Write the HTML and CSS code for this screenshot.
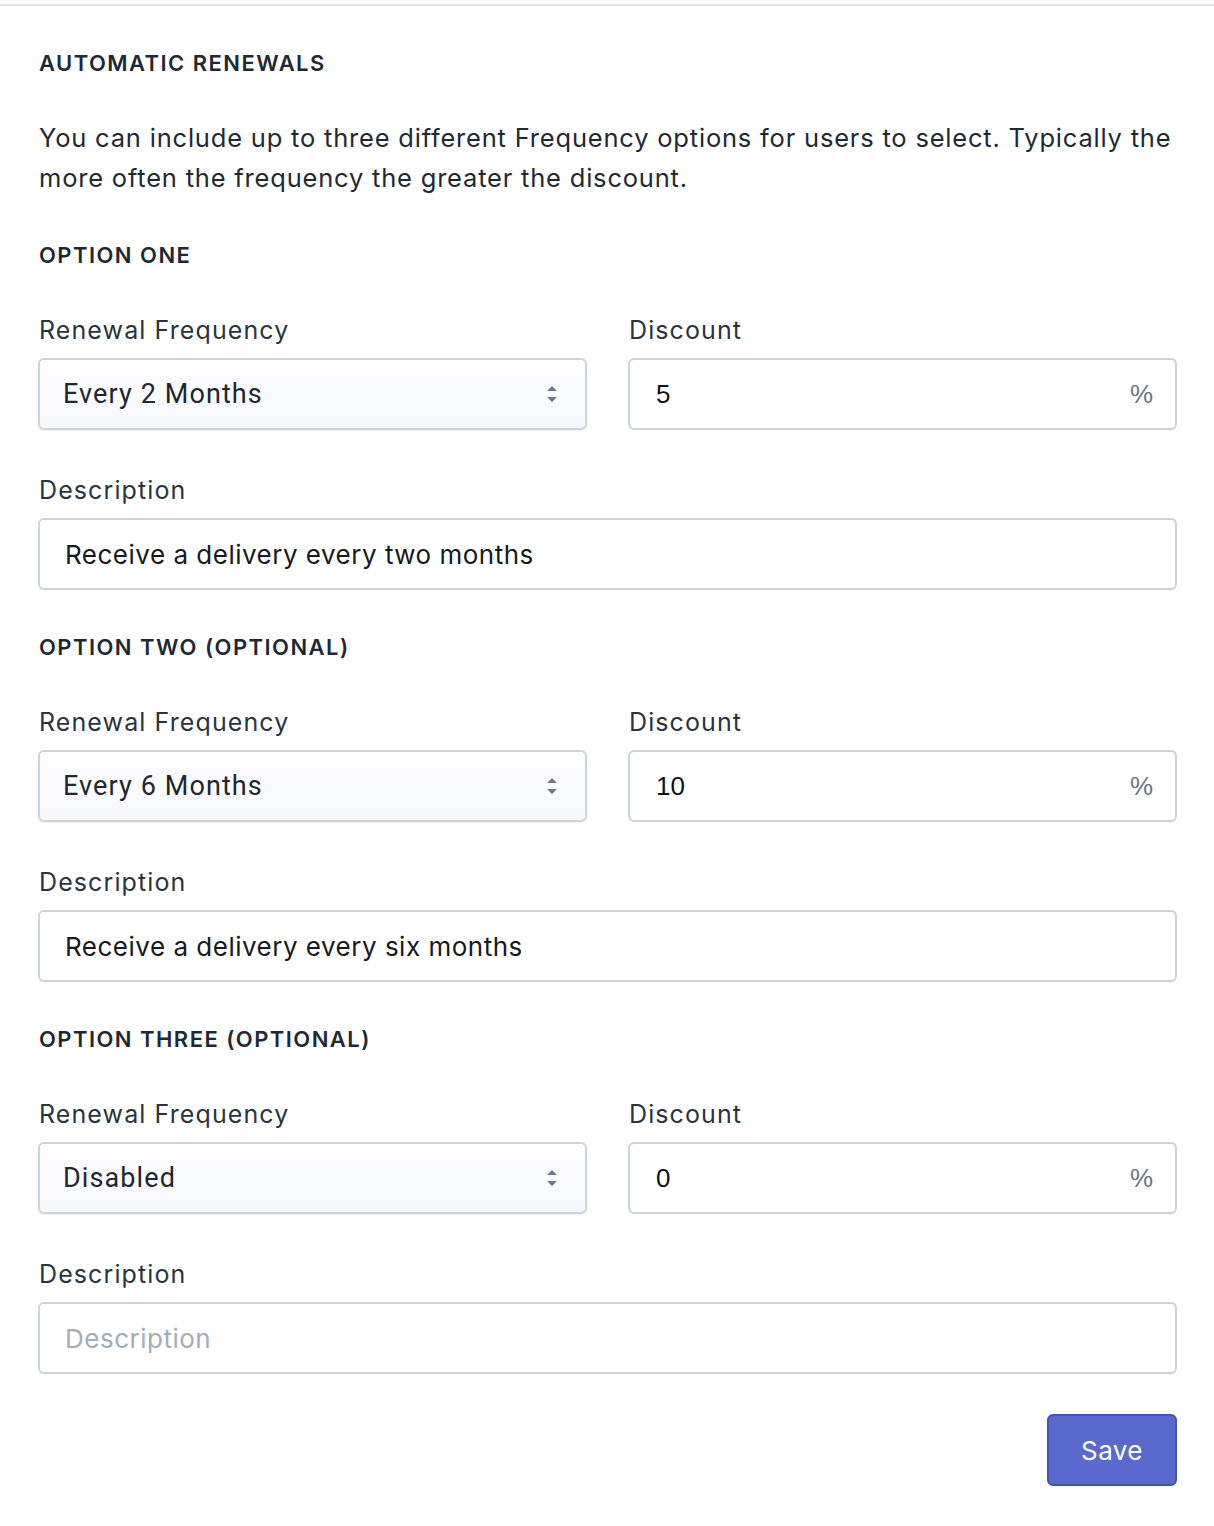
FILE: index.html
```html
<!DOCTYPE html>
<html lang="en">
<head>
  <meta charset="utf-8"/>
  <meta content="width=device-width, initial-scale=1.0" name="viewport"/>
  <title>Automatic Renewals</title>
  <link rel="stylesheet" href="styles.css">
</head>
<body>

<div class="panel">
  <h3 class="section-title">Automatic Renewals</h3>
  <p class="intro">You can include up to three different Frequency options for users to select. Typically the more often the frequency the greater the discount.</p>

  <div class="option">
    <h4 class="section-title">Option One</h4>
    <div class="row">
      <div class="field">
        <label>Renewal Frequency</label>
        <div class="select">
          <span>Every 2 Months</span>
          <svg width="12" height="20" viewBox="0 0 12 20"><path d="M6 2 L11 7 L1 7 Z M1 13 L11 13 L6 18 Z" fill="#6b7a8c"/></svg>
        </div>
      </div>
      <div class="field">
        <label>Discount</label>
        <div class="input discount"><span class="value">5</span><span class="suffix">%</span></div>
      </div>
    </div>
    <div class="field">
      <label>Description</label>
      <div class="input text">Receive a delivery every two months</div>
    </div>
  </div>

  <div class="option">
    <h4 class="section-title">Option Two (Optional)</h4>
    <div class="row">
      <div class="field">
        <label>Renewal Frequency</label>
        <div class="select">
          <span>Every 6 Months</span>
          <svg width="12" height="20" viewBox="0 0 12 20"><path d="M6 2 L11 7 L1 7 Z M1 13 L11 13 L6 18 Z" fill="#6b7a8c"/></svg>
        </div>
      </div>
      <div class="field">
        <label>Discount</label>
        <div class="input discount"><span class="value">10</span><span class="suffix">%</span></div>
      </div>
    </div>
    <div class="field">
      <label>Description</label>
      <div class="input text">Receive a delivery every six months</div>
    </div>
  </div>

  <div class="option">
    <h4 class="section-title">Option Three (Optional)</h4>
    <div class="row">
      <div class="field">
        <label>Renewal Frequency</label>
        <div class="select">
          <span>Disabled</span>
          <svg width="12" height="20" viewBox="0 0 12 20"><path d="M6 2 L11 7 L1 7 Z M1 13 L11 13 L6 18 Z" fill="#6b7a8c"/></svg>
        </div>
      </div>
      <div class="field">
        <label>Discount</label>
        <div class="input discount"><span class="value">0</span><span class="suffix">%</span></div>
      </div>
    </div>
    <div class="field">
      <label>Description</label>
      <div class="input text placeholder">Description</div>
    </div>
  </div>

  <div class="actions">
    <button class="btn-save">Save</button>
  </div>
</div>

</body>
</html>
```

FILE: styles.css
```css
body {
  margin: 0;
  padding-top: 4px;
  background: #fff;
  font-family: Inter, "Noto Sans", sans-serif;
  color: #1f2933;
}

.panel {
  border-top: 2px solid #e2e5ea;
  padding: 42px 37px 40px 38px;
}

.section-title {
  margin: 0 0 0 1px;
  font-size: 22px;
  line-height: 30px;
  font-weight: 600;
  letter-spacing: 1.45px;
  text-transform: uppercase;
  color: #1f2933;
}

.intro {
  margin: 40px 0 0 1px;
  font-size: 25.5px;
  line-height: 40px;
  letter-spacing: 0.8px;
  color: #1f2933;
}

.option {
  margin-top: 42px;
}

.row {
  display: grid;
  grid-template-columns: 1fr 1fr;
  column-gap: 41px;
}

.field {
  margin-top: 42px;
}

.field label {
  display: block;
  padding-left: 1px;
  font-size: 25px;
  line-height: 36px;
  letter-spacing: 1.1px;
  color: #2a3441;
  margin-bottom: 10px;
}

.select,
.input {
  box-sizing: border-box;
  height: 72px;
  border: 2px solid #cdd3da;
  border-radius: 6px;
  display: flex;
  align-items: center;
  font-size: 26px;
}

.select {
  justify-content: space-between;
  padding: 0 27px 0 23px;
  background: linear-gradient(#fdfdfe, #f7f8fa);
  box-shadow: 0 1px 2px rgba(0, 0, 0, 0.08);
  font-family: Roboto, "Liberation Sans", sans-serif;
  font-size: 27px;
  letter-spacing: 1.1px;
  color: #1f2630;
}

.input {
  background: #fff;
}

.discount {
  justify-content: space-between;
  padding: 0 22px 0 26px;
  font-family: "Liberation Sans", Arial, sans-serif;
  color: #111;
}

.discount .suffix {
  color: #6b7785;
}

.text {
  padding: 0 25px;
  letter-spacing: 0.5px;
  color: #16191d;
}

.placeholder {
  color: #a3acb8;
}

.actions {
  display: flex;
  justify-content: flex-end;
  margin-top: 40px;
}

.btn-save {
  width: 130px;
  height: 72px;
  background: #5a69cc;
  border: 2px solid #4653b4;
  border-radius: 6px;
  color: #fff;
  font-family: Inter, sans-serif;
  font-size: 26px;
  letter-spacing: 0.4px;
  cursor: pointer;
}
```
